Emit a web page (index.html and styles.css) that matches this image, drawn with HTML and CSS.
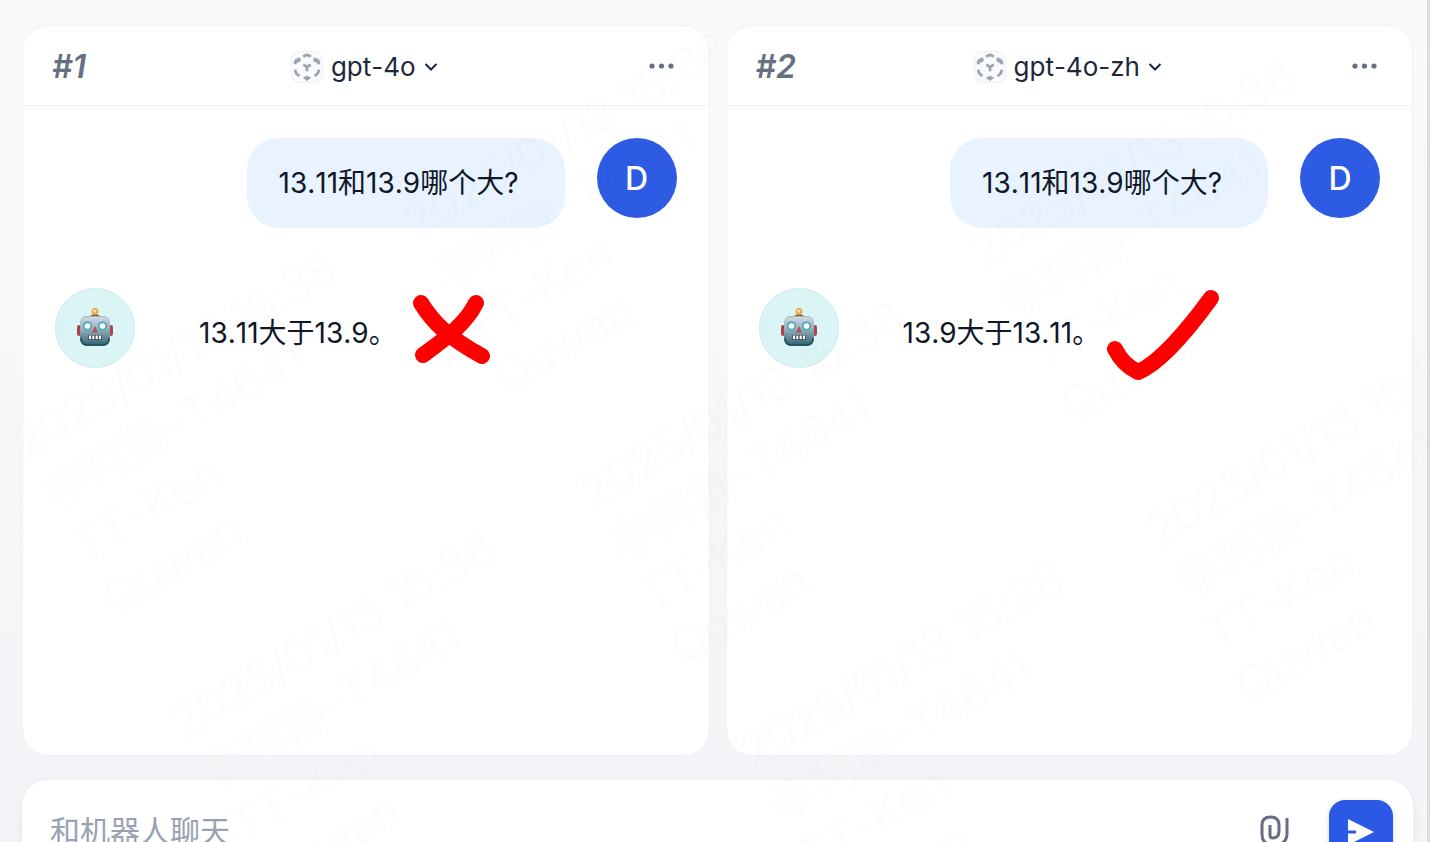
FILE: index.html
```html
<!DOCTYPE html>
<html lang="zh-CN">
<head>
<meta charset="utf-8">
<meta name="viewport" content="width=device-width, initial-scale=1">
<title>gpt-4o / gpt-4o-zh</title>
<link rel="stylesheet" href="styles.css">
</head>
<body>
<svg class="sprite" aria-hidden="true">
  <defs>
    <linearGradient id="metal" x1="0" y1="0" x2="0" y2="1">
      <stop offset="0" stop-color="#d3dcdf"/><stop offset=".45" stop-color="#93aeb7"/><stop offset="1" stop-color="#2f5f70"/>
    </linearGradient>
    <symbol id="cube" viewBox="0 0 32 32">
      <g fill="none" stroke="#9da5b4" stroke-width="3">
        <path d="M12 5Q16 1.500 20 5"/>
        <path d="M3.500 13V10.500L8 7.500M28.500 13V10.500L24 7.500"/>
        <path d="M3.500 19Q3.500 23.500 8 25.500M28.500 19Q28.500 23.500 24 25.500"/>
        <path d="M12 13.500L16 16L20 13.500M16 16V20.500" stroke-width="3"/>
      </g>
      <path d="M11.500 27.500L16 25L20.500 27.500L16 31ZM3 8L8.500 5.500L9.500 9.500L3 13ZM29 8L23.500 5.500L22.500 9.500L29 13Z" fill="#9da5b4"/>
    </symbol>
    <symbol id="chevron" viewBox="0 0 14 10">
      <path d="M1.500 2L7 7.500L12.500 2" fill="none" stroke="currentColor" stroke-width="2"/>
    </symbol>
    <symbol id="dots" viewBox="0 0 26 6">
      <g fill="currentColor"><circle cx="3" cy="3" r="2.600"/><circle cx="12.500" cy="3" r="2.600"/><circle cx="22" cy="3" r="2.600"/></g>
    </symbol>
    <symbol id="robot" viewBox="0 0 36 40">
      <rect x="0" y="17" width="4" height="11" rx="2" fill="#a9474b"/>
      <rect x="32" y="17" width="4" height="11" rx="2" fill="#a9474b"/>
      <path d="M13 8Q18 4 23 8V10H13Z" fill="#774b69"/>
      <circle cx="18" cy="3.500" r="3.500" fill="#e9a93c"/>
      <circle cx="17.500" cy="3" r="1.500" fill="#ffe698"/>
      <rect x="3" y="8" width="30" height="30" rx="7" fill="url(#metal)"/>
      <path d="M4 16V14Q4 8.500 10 8.500H26Q32 8.500 32 14V16" fill="none" stroke="#aab8bc"/>
      <path d="M4 30Q4 37 11 37H25Q32 37 32 30" fill="none" stroke="#244d5c" stroke-width="1.500"/>
      <g fill="#fff" stroke="#58a9c4" stroke-width="2"><circle cx="10.500" cy="18" r="3.800"/><circle cx="25.500" cy="18" r="3.800"/></g>
      <path d="M18 18L21 24.500H15Z" fill="#b94e4d"/>
      <rect x="11" y="27" width="14" height="4.500" rx="1" fill="#31444d"/>
      <path d="M13 27.500V31M16.300 27.500V31M19.700 27.500V31M23 27.500V31" stroke="#fff" stroke-width="2.200"/>
    </symbol>
    <symbol id="stamp" viewBox="0 0 400 240" overflow="visible">
      <text y="0">2025/01/13 16:38</text>
      <text y="60">李阿静-T4641</text>
      <text y="120">TT-Ken</text>
      <text y="180">Quwan</text>
    </symbol>
  </defs>
</svg>

<div class="app">
  <main class="panels">
    <section class="panel">
      <header class="panel-head">
        <h2 class="index">#1</h2>
        <button class="model" type="button">
          <span class="model-icon"><svg width="30" height="30"><use href="#cube"/></svg></span>
          <span>gpt-4o</span>
          <svg class="chevron" width="14" height="10"><use href="#chevron"/></svg>
        </button>
        <button class="more" type="button" aria-label="更多"><svg width="26" height="6"><use href="#dots"/></svg></button>
      </header>
      <div class="thread">
        <div class="row user">
          <p class="bubble">13.11和13.9哪个大?</p>
          <span class="avatar user-avatar">D</span>
        </div>
        <div class="row">
          <span class="avatar bot-avatar"><svg width="36" height="40"><use href="#robot"/></svg></span>
          <p class="answer">13.11大于13.9。</p>
          <svg class="mark cross" width="80" height="72" viewBox="0 0 80 72">
            <path d="M9 9C20 27 35 43 70 62M64 9C54 29 36 43 11 61"/>
          </svg>
        </div>
      </div>
    </section>

    <section class="panel">
      <header class="panel-head">
        <h2 class="index">#2</h2>
        <button class="model" type="button">
          <span class="model-icon"><svg width="30" height="30"><use href="#cube"/></svg></span>
          <span>gpt-4o-zh</span>
          <svg class="chevron" width="14" height="10"><use href="#chevron"/></svg>
        </button>
        <button class="more" type="button" aria-label="更多"><svg width="26" height="6"><use href="#dots"/></svg></button>
      </header>
      <div class="thread">
        <div class="row user">
          <p class="bubble">13.11和13.9哪个大?</p>
          <span class="avatar user-avatar">D</span>
        </div>
        <div class="row">
          <span class="avatar bot-avatar"><svg width="36" height="40"><use href="#robot"/></svg></span>
          <p class="answer">13.9大于13.11。</p>
          <svg class="mark check" width="114" height="92" viewBox="0 0 114 92">
            <path d="M9 60Q17 76 32 83C54 74 84 38 105 9"/>
          </svg>
        </div>
      </div>
    </section>
  </main>

  <form class="composer">
    <input class="prompt" type="text" placeholder="和机器人聊天" aria-label="和机器人聊天">
    <button class="attach" type="button" aria-label="附件">
      <svg width="32" height="36" viewBox="0 0 32 36" fill="none" stroke="currentColor" stroke-width="3">
        <path d="M11 12V22Q11 25 13.500 25Q20 25 20 18V12Q20 4 11.500 4Q3 4 3 12V21Q3 32 15 32Q28 32 28 20V5"/>
      </svg>
    </button>
    <button class="send" type="submit" aria-label="发送">
      <svg width="28" height="28" viewBox="0 0 28 28"><path d="M1 1L27 14L1 27V15.500H9V12.500H1Z" fill="#fff"/></svg>
    </button>
  </form>
</div>

<svg class="watermark" aria-hidden="true">
  <g transform="translate(25 460) rotate(-30)"><use href="#stamp" width="400" height="240"/></g>
  <g transform="translate(183 740) rotate(-30)"><use href="#stamp" width="400" height="240"/></g>
  <g transform="translate(416 240) rotate(-30)"><use href="#stamp" width="400" height="240"/></g>
  <g transform="translate(592 510) rotate(-30)"><use href="#stamp" width="400" height="240"/></g>
  <g transform="translate(752 770) rotate(-30)"><use href="#stamp" width="400" height="240"/></g>
  <g transform="translate(983 268) rotate(-30)"><use href="#stamp" width="400" height="240"/></g>
  <g transform="translate(1158 548) rotate(-30)"><use href="#stamp" width="400" height="240"/></g>
</svg>
</body>
</html>
```
FILE: styles.css
```css
* { box-sizing: border-box; }

body {
  margin: 0;
  height: 100vh;
  overflow: hidden;
  font-family: Inter, "Noto Sans CJK SC", sans-serif;
  font-kerning: none;
  font-feature-settings: "calt" 0;
  color: #101828;
}

h2, p { margin: 0; }

button {
  border: 0;
  padding: 0;
  background: none;
  font: inherit;
  color: inherit;
}

.sprite { position: absolute; width: 0; height: 0; }

.app {
  height: 100vh;
  display: flex;
  flex-direction: column;
  gap: 24px;
  padding: 25px 14px 0 22px;
  border-right: 3px solid #dcdddf;
  background: linear-gradient(#f9fafb, #f2f4f7);
}

.panels {
  flex: 1;
  display: grid;
  grid-template-columns: 1fr 1fr;
  gap: 16px;
}

.panel {
  border: 1px solid #eff1f4;
  border-radius: 26px;
  background: #fff;
}

.panel-head {
  display: grid;
  grid-template-columns: 1fr auto 1fr;
  align-items: center;
  height: 80px;
  padding: 0 32px 0 29px;
  border-bottom: 1px solid #eff0f3;
}

.index {
  padding-top: 2px;
  font-size: 32px;
  font-style: italic;
  font-weight: 600;
  line-height: 40px;
  color: #676f83;
}

.model {
  display: flex;
  align-items: center;
  gap: 8px;
  padding-top: 2px;
  font-size: 26px;
  line-height: 40px;
  color: #1d2939;
}

.model-icon {
  display: flex;
  border: 1px solid #eef0f3;
  border-radius: 8px;
  background: #f9fafb;
}

.more {
  display: flex;
  justify-self: end;
  padding: 8px 2px;
  color: #676f83;
}

.thread {
  display: flex;
  flex-direction: column;
  gap: 60px;
  padding: 32px;
}

.row { display: flex; align-items: flex-start; }

.user { justify-content: flex-end; gap: 32px; }

.bubble {
  padding: 21px 46px 21px 32px;
  border-radius: 32px;
  background: #e8f3ff;
  font-size: 28px;
  line-height: 48px;
}

.avatar {
  display: flex;
  flex: none;
  align-items: center;
  justify-content: center;
  width: 80px;
  height: 80px;
  border-radius: 50%;
}

.user-avatar {
  background: #2d5be3;
  color: #fff;
  font-size: 32px;
  font-weight: 500;
}

.bot-avatar {
  border: 1px solid #cdeaea;
  background: #dbf5f6;
}

.answer {
  padding: 21px 0 21px 64px;
  font-size: 28px;
  line-height: 48px;
}

.mark {
  flex: none;
  fill: none;
  stroke: #fe0000;
  stroke-width: 16px;
  stroke-linecap: round;
  stroke-linejoin: round;
}

.cross { margin: 6px 0 0 15px; }

.check { margin: 1px 0 0 6px; }

.composer {
  flex: none;
  display: flex;
  align-items: flex-start;
  height: 62px;
  padding: 20px 20px 0 28px;
  border-radius: 26px 26px 0 0;
  background: #fff;
  box-shadow: 0 4px 12px #1018280f;
}

.prompt {
  flex: 1;
  min-width: 0;
  height: 62px;
  padding: 0;
  border: 0;
  outline: 0;
  background: none;
  font: 30px/40px Inter, "Noto Sans CJK SC", sans-serif;
}

.prompt::placeholder { color: #98a2b3; opacity: 1; }

.attach {
  display: flex;
  margin: 13px 38px 0 0;
  color: #676f83;
}

.send {
  display: flex;
  align-items: center;
  justify-content: center;
  width: 64px;
  height: 64px;
  border-radius: 16px;
  background: #2b58e5;
  box-shadow: 0 2px 6px #2b58e530;
}

.watermark {
  position: absolute;
  inset: 0;
  width: 100%;
  height: 100%;
  pointer-events: none;
  font-size: 46px;
  font-weight: 300;
  fill: #000;
  opacity: 0.006;
}
```
